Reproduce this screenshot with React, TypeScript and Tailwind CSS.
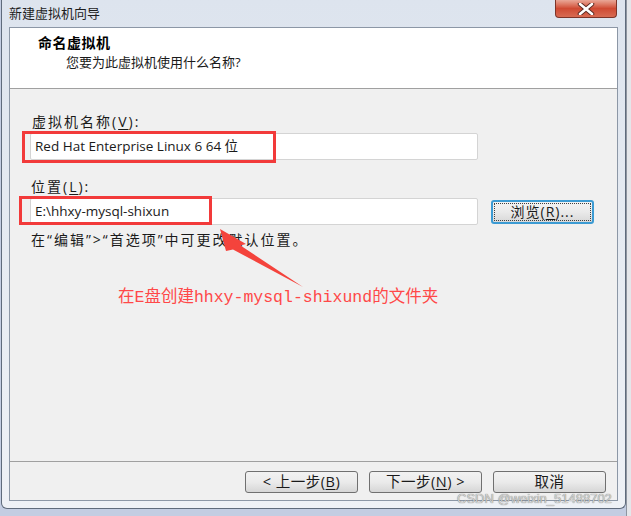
import React from 'react'

const ui = "font-['Open_Sans','Noto_Sans_CJK_SC',sans-serif]"

function Mn({ c }: { c: string }) {
  return <span className="underline underline-offset-2">{c}</span>
}

function WinButton({ children }: { children: React.ReactNode }) {
  return (
    <button
      className={`w-[113px] h-[22px] rounded-[3px] border border-[#707070] bg-gradient-to-b from-[#f2f2f2] via-[#ebebeb] to-[#d6d6d6] text-[14.5px] leading-none tracking-[0.5px] text-[#1a1a1a] flex items-center justify-center ${ui}`}
    >
      {children}
    </button>
  )
}

export default function App() {
  return (
    <div className="relative w-[631px] h-[516px] overflow-hidden bg-[#c3cde2] flex items-start">
      {/* wizard window */}
      <div className="relative ml-[1px] w-[625px] h-[509px] flex flex-col px-[7px] pb-[7px] border-x border-b border-[#5f6b7c] rounded-b-[6px] bg-gradient-to-b from-[#dde4ee] via-[#e6ebf2] to-[#eef1f6]">
        <div className={`h-[27px] flex items-center text-[13px] text-[#1e1e1e] ${ui}`}>新建虚拟机向导</div>

        {/* close button */}
        <div className="absolute top-0 right-[8px] w-[62px] h-[18px] rounded-b-[4px] border border-t-0 border-[#7d3428] bg-gradient-to-b from-[#e9a797] via-[#cf4a33] to-[#d86b52] flex items-center justify-center">
          <svg width="18" height="12" viewBox="0 0 18 12">
            <path d="M3 1 L15 11 M15 1 L3 11" stroke="#5a2a22" strokeWidth="4.5" strokeLinecap="round" />
            <path d="M3 1 L15 11 M15 1 L3 11" stroke="#ffffff" strokeWidth="2.6" strokeLinecap="round" />
          </svg>
        </div>

        {/* client area */}
        <div className="flex-1 flex flex-col border border-[#8c97a6] bg-[#f0f0f0]">
          <div className={`h-[61px] bg-white border-b border-[#a0a0a0] pt-[5px] pl-[28px] ${ui}`}>
            <div className="text-[14px] leading-[20px] font-bold tracking-[0.5px] text-black">命名虚拟机</div>
            <div className="ml-[28px] text-[13px] leading-[18px] text-[#1a1a1a]">您要为此虚拟机使用什么名称?</div>
          </div>

          <div className={`flex-1 flex flex-col pl-[20px] pr-[22px] pt-[24px] text-[14px] text-[#1a1a1a] ${ui}`}>
            <div className="ml-[2px] leading-[18px] tracking-[2px]">
              虚拟机名称(<Mn c="V" />):
            </div>
            <div className="mt-[2px] w-[448px] h-[27px] bg-white border border-[#d4d4d4] rounded-[2px] flex items-center pl-[4px] text-[13.5px]">
              Red Hat Enterprise Linux 6 64 位
            </div>

            <div className="mt-[18px] ml-[1px] leading-[18px] tracking-[2px]">
              位置(<Mn c="L" />):
            </div>
            <div className="mt-[2px] flex items-center gap-[13px]">
              <div className="w-[448px] h-[27px] bg-white border border-[#d4d4d4] rounded-[2px] flex items-center pl-[4px] text-[13.5px]">
                E:\hhxy-mysql-shixun
              </div>
              <div className="w-[103px] h-[24px] rounded-[3px] border-2 border-[#3c9bd3] bg-gradient-to-b from-[#f3f3f3] via-[#eaeaea] to-[#d8d8d8] p-[1px]">
                <div className="w-full h-full border border-dotted border-[#404040] flex items-center justify-center text-[14px] leading-none tracking-[1px]">
                  浏览(<Mn c="R" />)...
                </div>
              </div>
            </div>

            <div className="mt-[6px] ml-[1px] leading-[18px] tracking-[2px]">在“编辑”&gt;“首选项”中可更改默认位置。</div>
          </div>

          <div className="h-[39px] border-t border-[#a0a0a0] flex items-start pt-[9px] pl-[235px] gap-[11px]">
            <WinButton>
              &lt; 上一步(<Mn c="B" />)
            </WinButton>
            <WinButton>
              下一步(<Mn c="N" />) &gt;
            </WinButton>
            <WinButton>取消</WinButton>
          </div>
        </div>
      </div>

      {/* window behind, right edge */}
      <div className="h-full w-[5px] bg-[#e4e6ea] border-l border-[#8e95a0]" />

      {/* annotations */}
      <div className="absolute left-[22px] top-[131px] w-[254px] h-[32px] border-[3px] border-[#f23a3a]" />
      <div className="absolute left-[19px] top-[196px] w-[193px] h-[29px] border-[3px] border-[#f23a3a]" />
      <svg className="absolute left-0 top-0" width="631" height="516" viewBox="0 0 631 516">
        <polygon points="220,229 246,244 240.5,245.5 303,287 233,249.5 226,251" fill="#f4433c" />
      </svg>
      <div className="absolute left-[118px] top-[288px] text-[16.5px] leading-[20px] text-[#ff4848] font-['Liberation_Mono','Noto_Sans_CJK_SC',monospace]">
        在E盘创建hhxy-mysql-shixund的文件夹
      </div>
      <div className="absolute left-[457px] top-[491px] text-[13px] leading-[16px] text-[#d2d2d2] font-['Liberation_Sans',sans-serif] [text-shadow:0_0_1px_#5a5a5a]">
        CSDN @weixin_51488702
      </div>
    </div>
  )
}
